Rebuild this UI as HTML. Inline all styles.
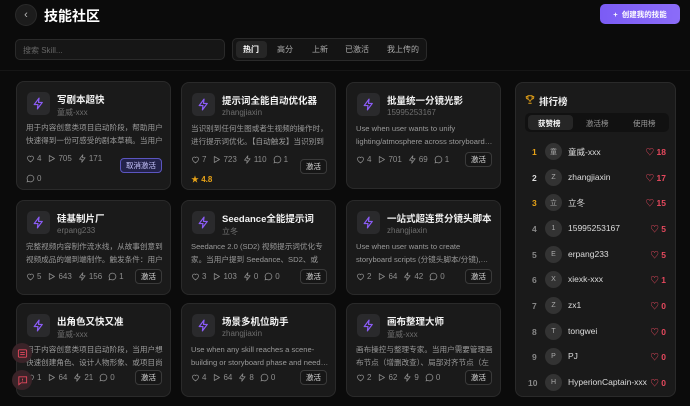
<!DOCTYPE html>
<html><head><meta charset="utf-8"><style>
*{margin:0;padding:0;box-sizing:border-box}
body{width:690px;height:406px;background:#0b0b0b;font-family:"Liberation Sans","Noto Sans CJK SC",sans-serif;color:#e8e8e8;position:relative;overflow:hidden}
.abs{position:absolute}
.card{position:absolute;background:#1a1a1a;border:1px solid #2a2a2a;border-radius:8px;width:155px}
.ic{position:absolute;left:10px;top:10px;width:23px;height:23px;border-radius:5px;background:#2a2a2c;display:flex;align-items:center;justify-content:center}
.t{position:absolute;left:40px;top:10px;font-size:9.5px;font-weight:bold;color:#f2f2f2;white-space:nowrap}
.a{position:absolute;left:40px;top:25px;font-size:8px;color:#6e6e6e}
.d{position:absolute;left:9px;top:40px;width:140px;font-size:7.6px;line-height:12.5px;color:#9a9a9a;height:25px;overflow:hidden}
.s{position:absolute;left:9px;font-size:8px;color:#8e8e8e;display:flex;gap:6px;align-items:center;white-space:nowrap}
.s span{display:flex;align-items:center;gap:2px}
.b{position:absolute;right:8px;width:27px;height:15px;border:1px solid #3a3a3a;border-radius:4px;font-size:7.5px;color:#ddd;display:flex;align-items:center;justify-content:center;background:#161616}
svg{display:block}
.lr{position:absolute;left:516px;width:160px;height:20px;font-size:8.5px}
.lr .n{position:absolute;left:16px;top:5px;color:#888;font-weight:bold}
.lr .av{position:absolute;left:29px;top:1px;width:17px;height:17px;border-radius:50%;background:#333;color:#aaa;font-size:7px;display:flex;align-items:center;justify-content:center}
.lr .nm{position:absolute;left:52px;top:4px;color:#ddd}
.lr .h{position:absolute;right:10px;top:4px;color:#e5485d;font-weight:bold;display:flex;gap:2px;align-items:center}
.tab{position:absolute;top:44px;font-size:8px;color:#aaa}
</style></head><body>
<svg width="0" height="0" style="position:absolute"><defs>
<symbol id="bolt" viewBox="0 0 24 24"><path d="M13 2L4 14h7l-1 8 9-12h-7z" fill="none" stroke="#8b5cf6" stroke-width="2.2" stroke-linejoin="round"/></symbol>
<symbol id="heart" viewBox="0 0 24 24"><path d="M12 21s-8-5-8-11a4.5 4.5 0 0 1 8-2.8A4.5 4.5 0 0 1 20 10c0 6-8 11-8 11z" fill="none" stroke="currentColor" stroke-width="2"/></symbol>
<symbol id="play" viewBox="0 0 24 24"><path d="M6 4l14 8-14 8z" fill="none" stroke="currentColor" stroke-width="2" stroke-linejoin="round"/></symbol>
<symbol id="zap" viewBox="0 0 24 24"><path d="M13 2L4 14h7l-1 8 9-12h-7z" fill="none" stroke="currentColor" stroke-width="2" stroke-linejoin="round"/></symbol>
<symbol id="msg" viewBox="0 0 24 24"><path d="M12 3a9 9 0 1 1-4.5 16.8L3 21l1.3-4.3A9 9 0 0 1 12 3z" fill="none" stroke="currentColor" stroke-width="2"/></symbol>
</defs></svg>

<div class="abs" style="left:15px;top:4px;width:22px;height:22px;border-radius:50%;background:#1c1c1c;border:1px solid #2a2a2a;color:#bbb;font-size:11px;display:flex;align-items:center;justify-content:center">‹</div>
<div class="abs" style="left:44px;top:6px;font-size:14px;font-weight:bold;color:#fff">技能社区</div>
<div class="abs" style="left:600px;top:4px;width:80px;height:20px;border-radius:5px;background:linear-gradient(90deg,#7b5cf5,#8b6cf8);color:#fff;font-size:7.5px;display:flex;align-items:center;justify-content:center;font-weight:bold">+&nbsp; 创建我的技能</div>

<div class="abs" style="left:15px;top:39px;width:210px;height:21px;border-radius:5px;background:#161616;border:1px solid #2a2a2a;color:#666;font-size:8px;padding:5px 7px">搜索 Skill...</div>
<div class="abs" style="left:232px;top:38px;width:195px;height:23px;border-radius:5px;background:#141414;border:1px solid #2a2a2a"></div>
<div class="abs" style="left:236px;top:41px;width:31px;height:17px;border-radius:4px;background:#262626"></div>
<div class="tab" style="left:243px;color:#fff;font-weight:bold">热门</div>
<div class="tab" style="left:277px">高分</div>
<div class="tab" style="left:312px">上新</div>
<div class="tab" style="left:345px">已激活</div>
<div class="tab" style="left:387px">我上传的</div>
<div class="abs" style="left:0;top:70px;width:690px;height:1px;background:#161616"></div>

<!-- Row 1 -->
<div class="card" style="left:16px;top:81px;height:109px">
<div class="ic"><svg width="13" height="13"><use href="#bolt"/></svg></div>
<div class="t">写剧本超快</div><div class="a">童威-xxx</div>
<div class="d">用于内容创意类项目启动阶段，帮助用户快速得到一份可感受的剧本草稿。当用户想…</div>
<div class="s" style="top:72px"><span><svg width="9" height="9"><use href="#heart"/></svg>4</span><span><svg width="9" height="9"><use href="#play"/></svg>705</span><span><svg width="9" height="9"><use href="#zap"/></svg>171</span></div>
<div class="b" style="top:76px;width:42px;border-color:#5b55c0;background:#23224a;color:#c9c6ff">取消激活</div>
<div class="s" style="top:92px"><span><svg width="9" height="9"><use href="#msg"/></svg>0</span></div>
</div>
<div class="card" style="left:181px;top:82px;height:108px">
<div class="ic"><svg width="13" height="13"><use href="#bolt"/></svg></div>
<div class="t">提示词全能自动优化器</div><div class="a">zhangjiaxin</div>
<div class="d">当识别到任何生图或者生视频的操作时，进行提示词优化。【自动触发】当识别到任…</div>
<div class="s" style="top:72px"><span><svg width="9" height="9"><use href="#heart"/></svg>7</span><span><svg width="9" height="9"><use href="#play"/></svg>723</span><span><svg width="9" height="9"><use href="#zap"/></svg>110</span><span><svg width="9" height="9"><use href="#msg"/></svg>1</span></div>
<div class="b" style="top:76px">激活</div>
<div class="s" style="top:91px;color:#e8a317;font-weight:bold"><span>★ 4.8</span></div>
</div>
<div class="card" style="left:346px;top:82px;height:107px">
<div class="ic"><svg width="13" height="13"><use href="#bolt"/></svg></div>
<div class="t">批量统一分镜光影</div><div class="a">15995253167</div>
<div class="d">Use when user wants to unify lighting/atmosphere across storyboard…</div>
<div class="s" style="top:72px"><span><svg width="9" height="9"><use href="#heart"/></svg>4</span><span><svg width="9" height="9"><use href="#play"/></svg>701</span><span><svg width="9" height="9"><use href="#zap"/></svg>69</span><span><svg width="9" height="9"><use href="#msg"/></svg>1</span></div>
<div class="b" style="top:69px">激活</div>
</div>

<!-- Row 2 -->
<div class="card" style="left:16px;top:200px;height:95px">
<div class="ic"><svg width="13" height="13"><use href="#bolt"/></svg></div>
<div class="t">硅基制片厂</div><div class="a">erpang233</div>
<div class="d">完整视频内容制作流水线，从故事创意到视频成品的端到端制作。触发条件：用户明…</div>
<div class="s" style="top:71px"><span><svg width="9" height="9"><use href="#heart"/></svg>5</span><span><svg width="9" height="9"><use href="#play"/></svg>643</span><span><svg width="9" height="9"><use href="#zap"/></svg>156</span><span><svg width="9" height="9"><use href="#msg"/></svg>1</span></div>
<div class="b" style="top:68px">激活</div>
</div>
<div class="card" style="left:181px;top:200px;height:95px">
<div class="ic"><svg width="13" height="13"><use href="#bolt"/></svg></div>
<div class="t">Seedance全能提示词</div><div class="a">立冬</div>
<div class="d">Seedance 2.0 (SD2) 视频提示词优化专家。当用户提到 Seedance、SD2、或需…</div>
<div class="s" style="top:71px"><span><svg width="9" height="9"><use href="#heart"/></svg>3</span><span><svg width="9" height="9"><use href="#play"/></svg>103</span><span><svg width="9" height="9"><use href="#zap"/></svg>0</span><span><svg width="9" height="9"><use href="#msg"/></svg>0</span></div>
<div class="b" style="top:68px">激活</div>
</div>
<div class="card" style="left:346px;top:200px;height:95px">
<div class="ic"><svg width="13" height="13"><use href="#bolt"/></svg></div>
<div class="t">一站式超连贯分镜头脚本</div><div class="a">zhangjiaxin</div>
<div class="d">Use when user wants to create storyboard scripts (分镜头脚本/分镜),…</div>
<div class="s" style="top:71px"><span><svg width="9" height="9"><use href="#heart"/></svg>2</span><span><svg width="9" height="9"><use href="#play"/></svg>64</span><span><svg width="9" height="9"><use href="#zap"/></svg>42</span><span><svg width="9" height="9"><use href="#msg"/></svg>0</span></div>
<div class="b" style="top:68px">激活</div>
</div>

<!-- Row 3 -->
<div class="card" style="left:16px;top:303px;height:94px">
<div class="ic"><svg width="13" height="13"><use href="#bolt"/></svg></div>
<div class="t">出角色又快又准</div><div class="a">童威-xxx</div>
<div class="d">用于内容创意类项目启动阶段，当用户想快速创建角色、设计人物形象、或项目尚无…</div>
<div class="s" style="top:69px"><span><svg width="9" height="9"><use href="#heart"/></svg>1</span><span><svg width="9" height="9"><use href="#play"/></svg>64</span><span><svg width="9" height="9"><use href="#zap"/></svg>21</span><span><svg width="9" height="9"><use href="#msg"/></svg>0</span></div>
<div class="b" style="top:66px">激活</div>
</div>
<div class="card" style="left:181px;top:303px;height:94px">
<div class="ic"><svg width="13" height="13"><use href="#bolt"/></svg></div>
<div class="t">场景多机位助手</div><div class="a">zhangjiaxin</div>
<div class="d">Use when any skill reaches a scene-building or storyboard phase and need…</div>
<div class="s" style="top:69px"><span><svg width="9" height="9"><use href="#heart"/></svg>4</span><span><svg width="9" height="9"><use href="#play"/></svg>64</span><span><svg width="9" height="9"><use href="#zap"/></svg>8</span><span><svg width="9" height="9"><use href="#msg"/></svg>0</span></div>
<div class="b" style="top:66px">激活</div>
</div>
<div class="card" style="left:346px;top:303px;height:94px">
<div class="ic"><svg width="13" height="13"><use href="#bolt"/></svg></div>
<div class="t">画布整理大师</div><div class="a">童威-xxx</div>
<div class="d">画布操控与整理专家。当用户需要管理画布节点（增删改查）、局部对齐节点（左对…</div>
<div class="s" style="top:69px"><span><svg width="9" height="9"><use href="#heart"/></svg>2</span><span><svg width="9" height="9"><use href="#play"/></svg>62</span><span><svg width="9" height="9"><use href="#zap"/></svg>9</span><span><svg width="9" height="9"><use href="#msg"/></svg>0</span></div>
<div class="b" style="top:66px">激活</div>
</div>

<!-- floating buttons -->
<div class="abs" style="left:12px;top:343px;width:20px;height:20px;border-radius:50%;background:#3a2328;display:flex;align-items:center;justify-content:center"><svg width="11" height="11" viewBox="0 0 24 24"><rect x="3" y="4" width="18" height="16" rx="2" fill="none" stroke="#e5485d" stroke-width="2"/><path d="M7 10h10M7 14h10" stroke="#e5485d" stroke-width="2"/></svg></div>
<div class="abs" style="left:12px;top:370px;width:20px;height:20px;border-radius:50%;background:#3a2328;display:flex;align-items:center;justify-content:center"><svg width="11" height="11" viewBox="0 0 24 24"><path d="M3 4h18v13H9l-5 4V4z" fill="none" stroke="#e5485d" stroke-width="2"/><path d="M12 8v4M12 14v1" stroke="#e5485d" stroke-width="2"/></svg></div>

<!-- leaderboard -->
<div class="abs" style="left:515px;top:82px;width:161px;height:315px;background:#1a1a1a;border:1px solid #2a2a2a;border-radius:8px"></div>
<div class="abs" style="left:525px;top:94px"><svg width="10" height="11" viewBox="0 0 24 24"><path d="M7 3h10v6a5 5 0 0 1-10 0zM7 5H3v2a4 4 0 0 0 4 4M17 5h4v2a4 4 0 0 1-4 4M12 14v4M8 21h8" fill="none" stroke="#e8a317" stroke-width="2.2"/></svg></div>
<div class="abs" style="left:539px;top:94px;font-size:9.5px;font-weight:bold;color:#f2f2f2">排行榜</div>
<div class="abs" style="left:525px;top:113px;width:144px;height:19px;border-radius:5px;background:#111"></div>
<div class="abs" style="left:528px;top:115px;width:45px;height:15px;border-radius:4px;background:#262626"></div>
<div class="abs" style="left:538px;top:118px;font-size:7.5px;color:#fff;font-weight:bold">获赞榜</div>
<div class="abs" style="left:586px;top:118px;font-size:7.5px;color:#999">激活榜</div>
<div class="abs" style="left:633px;top:118px;font-size:7.5px;color:#999">使用榜</div>

<div class="lr" style="top:142px"><span class="n" style="color:#e8a317">1</span><span class="av">童</span><span class="nm">童威-xxx</span><span class="h">♡ 18</span></div>
<div class="lr" style="top:168px"><span class="n" style="color:#ddd">2</span><span class="av">Z</span><span class="nm">zhangjiaxin</span><span class="h">♡ 17</span></div>
<div class="lr" style="top:193px"><span class="n" style="color:#e8a317">3</span><span class="av">立</span><span class="nm">立冬</span><span class="h">♡ 15</span></div>
<div class="lr" style="top:219px"><span class="n">4</span><span class="av">1</span><span class="nm">15995253167</span><span class="h">♡ 5</span></div>
<div class="lr" style="top:245px"><span class="n">5</span><span class="av">E</span><span class="nm">erpang233</span><span class="h">♡ 5</span></div>
<div class="lr" style="top:270px"><span class="n">6</span><span class="av">X</span><span class="nm">xiexk-xxx</span><span class="h">♡ 1</span></div>
<div class="lr" style="top:296px"><span class="n">7</span><span class="av">Z</span><span class="nm">zx1</span><span class="h">♡ 0</span></div>
<div class="lr" style="top:322px"><span class="n">8</span><span class="av">T</span><span class="nm">tongwei</span><span class="h">♡ 0</span></div>
<div class="lr" style="top:347px"><span class="n">9</span><span class="av">P</span><span class="nm">PJ</span><span class="h">♡ 0</span></div>
<div class="lr" style="top:373px"><span class="n" style="left:12px">10</span><span class="av">H</span><span class="nm">HyperionCaptain-xxx</span><span class="h">♡ 0</span></div>
</body></html>
